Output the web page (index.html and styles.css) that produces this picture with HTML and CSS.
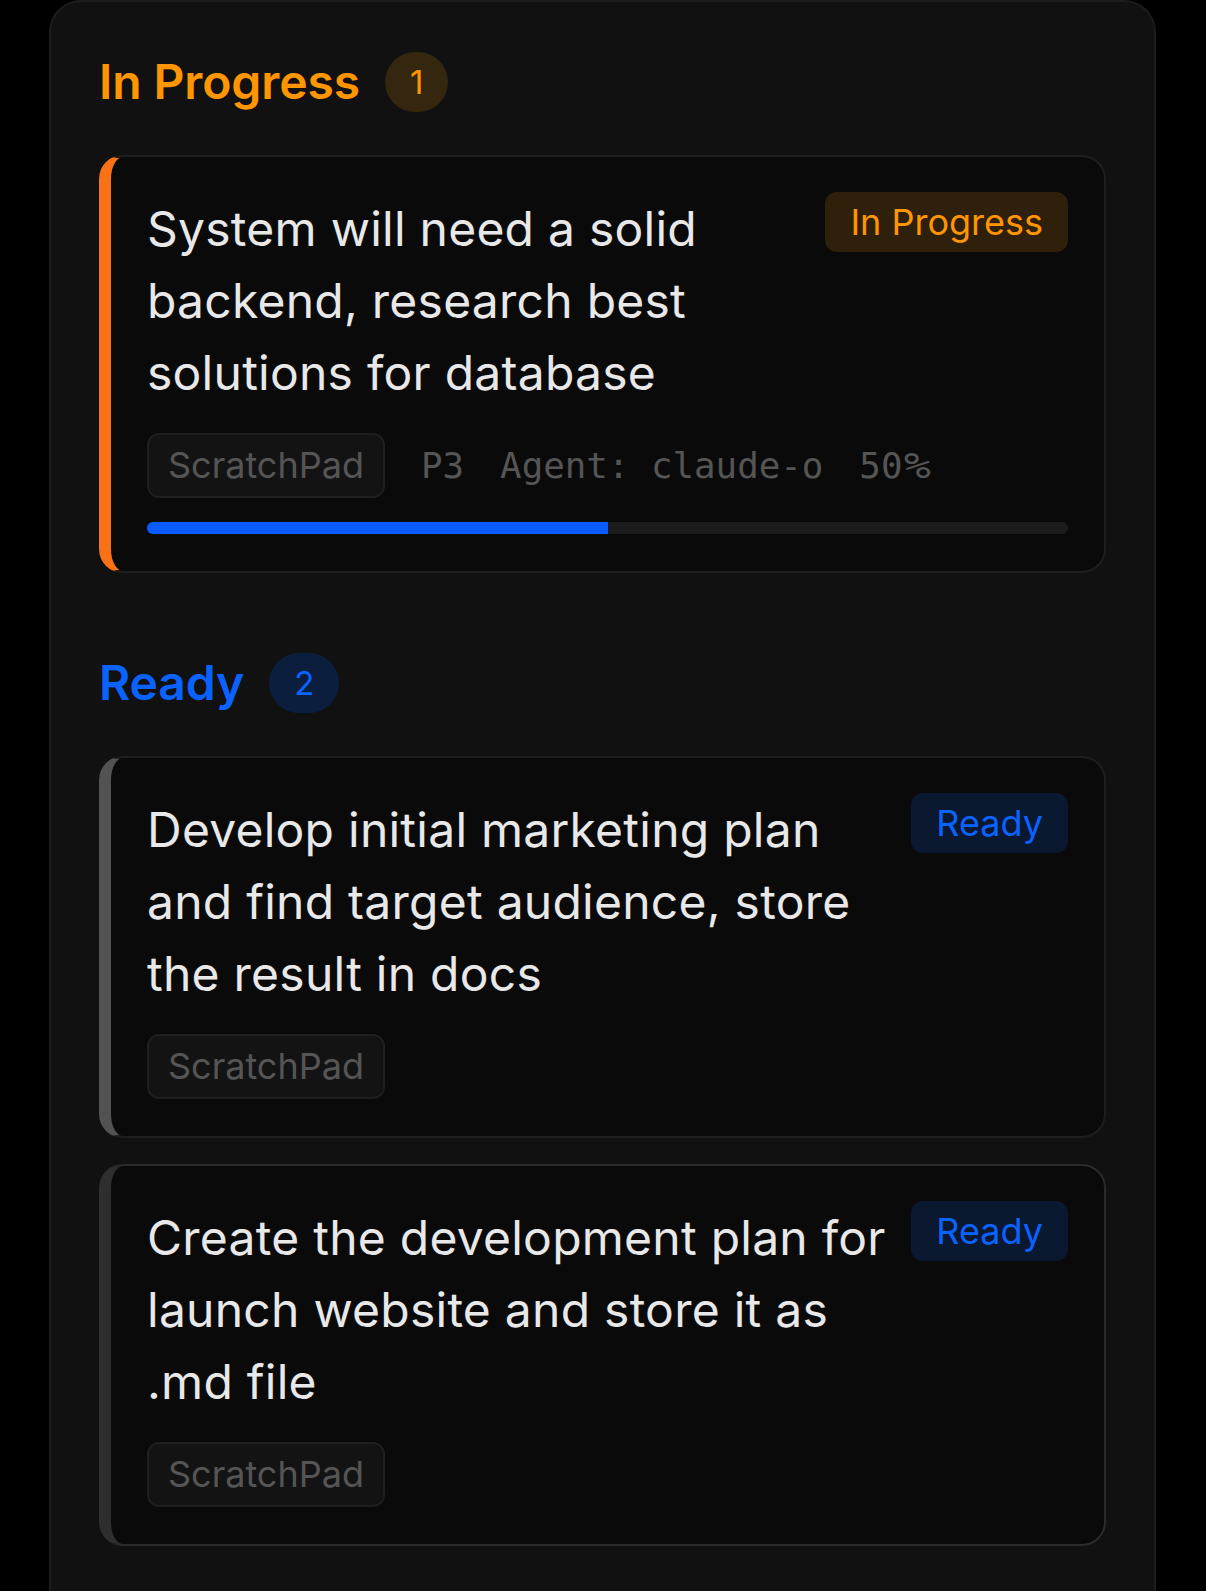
FILE: index.html
```html
<!DOCTYPE html>
<html lang="en">
<head>
<meta charset="utf-8">
<title>Tasks</title>
<link rel="stylesheet" href="styles.css">
</head>
<body>
<div class="panel">
  <section class="group">
    <div class="group-head">
      <h2 class="group-title orange">In Progress</h2>
      <span class="count count-orange">1</span>
    </div>
    <div class="cards">
      <article class="card card-progress">
        <div class="card-top">
          <p class="card-title">System will need a solid backend, research best solutions for database</p>
          <span class="status status-progress">In Progress</span>
        </div>
        <div class="meta">
          <span class="tag">ScratchPad</span>
          <span class="mono">P3</span>
          <span class="mono">Agent: claude-o</span>
          <span class="mono mono-pct">50<span class="pct">%</span></span>
        </div>
        <div class="track"><div class="fill" style="width:50%"></div></div>
      </article>
    </div>
  </section>

  <section class="group group-second">
    <div class="group-head">
      <h2 class="group-title blue">Ready</h2>
      <span class="count count-blue">2</span>
    </div>
    <div class="cards">
      <article class="card card-ready">
        <div class="card-top">
          <p class="card-title">Develop initial marketing plan and find target audience, store the result in docs</p>
          <span class="status status-ready">Ready</span>
        </div>
        <div class="meta">
          <span class="tag">ScratchPad</span>
        </div>
      </article>
      <article class="card card-ready card-hover">
        <div class="card-top">
          <p class="card-title">Create the development plan for launch website and store it as .md file</p>
          <span class="status status-ready">Ready</span>
        </div>
        <div class="meta">
          <span class="tag">ScratchPad</span>
        </div>
      </article>
    </div>
  </section>
</div>
</body>
</html>
```

FILE: styles.css
```css
* {
  box-sizing: border-box;
}

html, body {
  margin: 0;
  padding: 0;
  background: #000;
}

body {
  font-family: Inter, "Noto Sans", "Liberation Sans", sans-serif;
  color: #e8e8e8;
  overflow: hidden;
  height: 100vh;
}

.panel {
  margin: 0 50px 0 49px;
  min-height: 100vh;
  background: #111111;
  border: 2px solid #1c1c1c;
  border-bottom: 0;
  border-radius: 32px 32px 0 0;
  padding: 50px 48px 40px 48px;
}

.group-second {
  margin-top: 80px;
}

.group-head {
  display: flex;
  align-items: center;
  gap: 25px;
  height: 60px;
  margin-bottom: 43px;
}

.group-title {
  margin: 0;
  font-size: 48px;
  font-weight: 600;
  line-height: 58px;
  letter-spacing: -0.1px;
}

.orange {
  color: #ff9500;
}

.blue {
  color: #0a62ff;
}

.count {
  height: 60px;
  line-height: 60px;
  padding: 0 25px;
  border-radius: 30px;
  font-size: 33px;
  font-weight: 400;
}

.count-orange {
  background: #352610;
  color: #ff9500;
}

.count-blue {
  background: #0c1e3d;
  color: #0a62ff;
}

.cards {
  display: flex;
  flex-direction: column;
  gap: 26px;
}

.card {
  background: #0a0a0a;
  border: 2px solid #1e1e1e;
  border-left-width: 12px;
  border-radius: 24px;
  padding: 36px 36px 37px 36px;
}

.card-progress {
  border-left-color: #f97316;
}

.card-ready {
  border-left-color: #525252;
}

.card-hover {
  border-color: #2b2b2b;
  border-left-color: #2e2e2e;
}

.card-top {
  display: flex;
  align-items: flex-start;
  gap: 24px;
}

.card-title {
  flex: 1;
  margin: 0;
  font-size: 48px;
  line-height: 72px;
  font-weight: 400;
  letter-spacing: 0.25px;
  color: #e8e8e8;
}

.status {
  flex: none;
  height: 60px;
  line-height: 60px;
  padding: 0 25px;
  border-radius: 12px;
  font-size: 36px;
  font-weight: 400;
  margin-top: -1px;
}

.status-progress {
  background: #2e200b;
  color: #ff9500;
}

.status-ready {
  background: #0a1830;
  color: #0a62ff;
}

.meta {
  display: flex;
  align-items: center;
  gap: 36px;
  margin-top: 24px;
}

.tag {
  display: inline-block;
  height: 65px;
  line-height: 61px;
  padding: 0 19px;
  border: 2px solid #1f1f1f;
  border-radius: 12px;
  background: #131313;
  color: #555555;
  font-size: 36px;
}

.mono {
  font-family: "DejaVu Sans Mono", "Liberation Mono", monospace;
  font-size: 35.8px;
  color: #555555;
  line-height: 44px;
}

.pct {
  display: inline-block;
  margin-left: 2px;
  transform: scaleX(1.25);
  transform-origin: left center;
}

.track {
  margin-top: 24px;
  height: 12px;
  border-radius: 6px;
  background: #1c1c1c;
  overflow: hidden;
}

.fill {
  height: 100%;
  background: #0a5cff;
}
```
